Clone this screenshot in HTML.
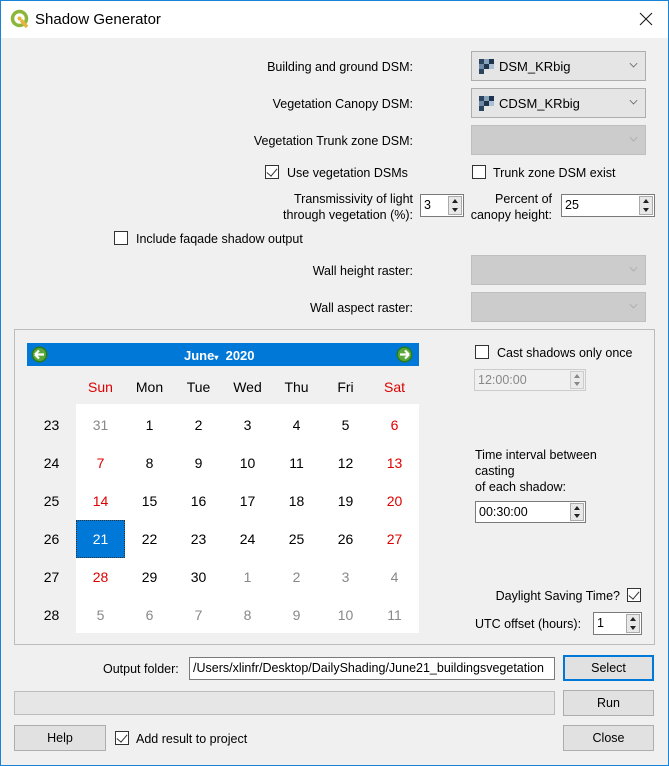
<!DOCTYPE html>
<html><head><meta charset="utf-8"><style>
*{box-sizing:border-box;margin:0;padding:0}
body{width:669px;height:766px;overflow:hidden;background:#f0f0f0;font-family:"Liberation Sans",sans-serif;font-size:12.5px;color:#000;position:relative}
.a{position:absolute}
.frame{position:absolute;left:0;top:0;width:669px;height:766px;border:1px solid #1883d7;pointer-events:none}
.title{left:0;top:0;width:669px;height:38px;background:#fff}
.lbl{position:absolute;text-align:right;white-space:nowrap}
.combo{position:absolute;left:471px;width:175px;height:30px;background:#e5e5e5;border:1px solid #adadad;font-size:13px}
.combo.dis{background:#cccccc;border-color:#bfbfbf}
.combo .arr{position:absolute;right:8px;top:8px;width:7px;height:7px;border-right:1px solid #666;border-bottom:1px solid #666;transform:rotate(45deg) scale(.8)}
.combo.dis .arr{border-color:#aaa}
.cb{position:absolute;width:14px;height:14px;border:1px solid #333;background:#fff}
.cb.on::after{content:"";position:absolute;left:3px;top:0px;width:5px;height:9px;border-right:1.3px solid #333;border-bottom:1.3px solid #333;transform:rotate(40deg)}
.edit{position:absolute;background:#fff;border:1px solid #7a7a7a;padding-left:3px;line-height:20px}
.edit.dis{background:#f0f0f0;border-color:#ccc;color:#888}
.spin{position:absolute;right:1px;top:1px;width:14px;bottom:1px;border:1px solid #aaa;background:#e8e8e8}
.spin::before{content:"";position:absolute;left:3px;top:2px;border-left:3px solid transparent;border-right:3px solid transparent;border-bottom:4px solid #222}
.spin::after{content:"";position:absolute;left:3px;bottom:2px;border-left:3px solid transparent;border-right:3px solid transparent;border-top:4px solid #222}
.btn{position:absolute;background:#e1e1e1;border:1px solid #adadad;text-align:center;line-height:24px}
.cal td{width:49px;height:38px;text-align:center;font-size:14px}
.r{color:#d00}.g{color:#888}
</style></head><body>
<div class="a title"></div>
<svg class="a" style="left:10px;top:9px" width="20" height="20" viewBox="0 0 20 20"><circle cx="9.5" cy="9.5" r="7" fill="none" stroke="#8bb63b" stroke-width="3.5"/><path d="M11 11 L17 18" stroke="#e9b43a" stroke-width="3.5"/><circle cx="9.5" cy="9.5" r="2" fill="#e9b43a"/></svg>
<div class="a" style="left:35px;top:11px;font-size:15px">Shadow Generator</div>
<svg class="a" style="left:639px;top:12px" width="14" height="14"><path d="M1 1L13 13M13 1L1 13" stroke="#111" stroke-width="1"/></svg>

<div class="lbl" style="right:256px;top:60px">Building and ground DSM:</div>
<div class="combo" style="top:51px"><svg class="a" style="left:7px;top:7px" width="16" height="16"><rect x="0" y="0" width="5" height="5" fill="#2b4560"/><rect x="10" y="0" width="5" height="5" fill="#1d3550"/><rect x="5" y="5" width="5" height="5" fill="#20344c"/><rect x="0" y="10" width="5" height="5" fill="#2b4560"/><rect x="5" y="0" width="5" height="5" fill="#8aa3bd"/><rect x="10" y="5" width="5" height="5" fill="#aac0d6"/><rect x="0" y="5" width="5" height="5" fill="#6e8aa6"/></svg><span class="a" style="left:27px;top:7px">DSM_KRbig</span><div class="arr"></div></div>
<div class="lbl" style="right:256px;top:97px">Vegetation Canopy DSM:</div>
<div class="combo" style="top:88px"><svg class="a" style="left:7px;top:7px" width="16" height="16"><rect x="0" y="0" width="5" height="5" fill="#2b4560"/><rect x="10" y="0" width="5" height="5" fill="#1d3550"/><rect x="5" y="5" width="5" height="5" fill="#20344c"/><rect x="0" y="10" width="5" height="5" fill="#2b4560"/><rect x="5" y="0" width="5" height="5" fill="#8aa3bd"/><rect x="10" y="5" width="5" height="5" fill="#aac0d6"/><rect x="0" y="5" width="5" height="5" fill="#6e8aa6"/></svg><span class="a" style="left:27px;top:7px">CDSM_KRbig</span><div class="arr"></div></div>
<div class="lbl" style="right:256px;top:134px">Vegetation Trunk zone DSM:</div>
<div class="combo dis" style="top:125px"><div class="arr"></div></div>

<div class="cb on" style="left:265px;top:165px"></div><div class="a" style="left:287px;top:166px">Use vegetation DSMs</div>
<div class="cb" style="left:472px;top:165px"></div><div class="a" style="left:493px;top:166px">Trunk zone DSM exist</div>

<div class="lbl" style="right:256px;top:191px;line-height:16px">Transmissivity of light<br>through vegetation (%):</div>
<div class="edit" style="left:420px;top:194px;width:44px;height:23px">3<div class="spin"></div></div>
<div class="lbl" style="right:117px;top:191px;line-height:16px;text-align:right">Percent of<br>canopy height:</div>
<div class="edit" style="left:561px;top:194px;width:94px;height:23px">25<div class="spin"></div></div>

<div class="cb" style="left:114px;top:231px"></div><div class="a" style="left:136px;top:232px">Include faqade shadow output</div>

<div class="lbl" style="right:256px;top:264px">Wall height raster:</div>
<div class="combo dis" style="top:255px"><div class="arr"></div></div>
<div class="lbl" style="right:256px;top:301px">Wall aspect raster:</div>
<div class="combo dis" style="top:292px"><div class="arr"></div></div>

<div class="a" style="left:14px;top:329px;width:641px;height:316px;border:1px solid #bcbcbc"></div>
<div class="a" style="left:27px;top:343px;width:392px;height:23px;background:#0078d7"></div>
<svg class="a" style="left:31px;top:346px" width="17" height="17"><circle cx="8.5" cy="8.5" r="8" fill="#2a7a1e"/><circle cx="8.5" cy="8.5" r="6.5" fill="#5aa83a"/><path d="M4 8.5h9M4 8.5l4-4M4 8.5l4 4" stroke="#fff" stroke-width="2.2" fill="none"/></svg>
<svg class="a" style="left:396px;top:346px" width="17" height="17"><circle cx="8.5" cy="8.5" r="8" fill="#2a7a1e"/><circle cx="8.5" cy="8.5" r="6.5" fill="#5aa83a"/><path d="M4 8.5h9M13 8.5l-4-4M13 8.5l-4 4" stroke="#fff" stroke-width="2.2" fill="none"/></svg>
<div class="a" style="left:184px;top:348px;color:#fff;font-weight:bold;font-size:13px">June<span style="font-size:8px">▾</span>&nbsp;&nbsp;2020</div>
<div class="a" style="left:76px;top:404px;width:343px;height:229px;background:#fff"></div>
<table class="a cal" style="left:27px;top:368px;border-collapse:collapse">
<tr><td></td><td class="r">Sun</td><td>Mon</td><td>Tue</td><td>Wed</td><td>Thu</td><td>Fri</td><td class="r">Sat</td></tr>
<tr><td>23</td><td class="g">31</td><td>1</td><td>2</td><td>3</td><td>4</td><td>5</td><td class="r">6</td></tr>
<tr><td>24</td><td class="r">7</td><td>8</td><td>9</td><td>10</td><td>11</td><td>12</td><td class="r">13</td></tr>
<tr><td>25</td><td class="r">14</td><td>15</td><td>16</td><td>17</td><td>18</td><td>19</td><td class="r">20</td></tr>
<tr><td>26</td><td style="background:#0078d7;color:#fff;outline:1px dotted #333;outline-offset:-1px">21</td><td>22</td><td>23</td><td>24</td><td>25</td><td>26</td><td class="r">27</td></tr>
<tr><td>27</td><td class="r">28</td><td>29</td><td>30</td><td class="g">1</td><td class="g">2</td><td class="g">3</td><td class="g">4</td></tr>
<tr><td>28</td><td class="g">5</td><td class="g">6</td><td class="g">7</td><td class="g">8</td><td class="g">9</td><td class="g">10</td><td class="g">11</td></tr>
</table>

<div class="cb" style="left:475px;top:345px"></div><div class="a" style="left:497px;top:346px">Cast shadows only once</div>
<div class="edit dis" style="left:474px;top:369px;width:112px;height:22px">12:00:00<div class="spin" style="opacity:.5"></div></div>
<div class="a" style="left:475px;top:447px;line-height:16px">Time interval between<br>casting<br>of each shadow:</div>
<div class="edit" style="left:475px;top:501px;width:111px;height:22px">00:30:00<div class="spin"></div></div>
<div class="lbl" style="right:49px;top:589px">Daylight Saving Time?</div>
<div class="cb on" style="left:627px;top:588px"></div>
<div class="a" style="left:475px;top:617px">UTC offset (hours):</div>
<div class="edit" style="left:593px;top:612px;width:49px;height:23px">1<div class="spin"></div></div>

<div class="a" style="left:103px;top:662px">Output folder:</div>
<div class="edit" style="left:189px;top:657px;width:366px;height:23px;font-size:12.5px;white-space:nowrap;overflow:hidden">/Users/xlinfr/Desktop/DailyShading/June21_buildingsvegetation</div>
<div class="btn" style="left:563px;top:655px;width:91px;height:26px;border:2px solid #0078d7;line-height:22px">Select</div>
<div class="a" style="left:14px;top:691px;width:541px;height:24px;background:#e6e6e6;border:1px solid #bcbcbc"></div>
<div class="btn" style="left:563px;top:690px;width:91px;height:26px">Run</div>
<div class="btn" style="left:14px;top:725px;width:92px;height:26px">Help</div>
<div class="cb on" style="left:115px;top:731px"></div><div class="a" style="left:136px;top:732px">Add result to project</div>
<div class="btn" style="left:563px;top:725px;width:91px;height:26px">Close</div>
<div class="frame"></div>
</body></html>
